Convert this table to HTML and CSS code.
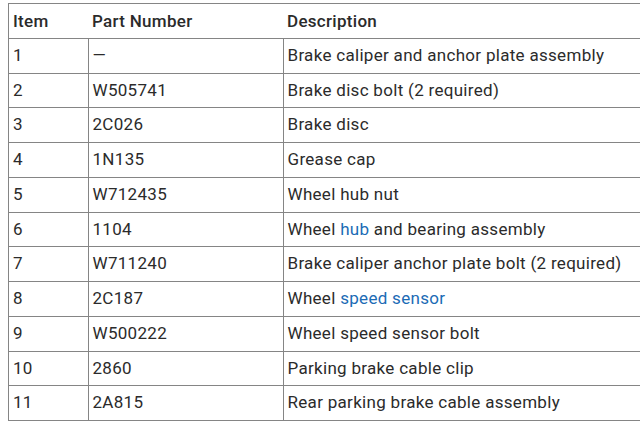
FILE: index.html
```html
<!DOCTYPE html>
<html>
<head>
<meta charset="utf-8">
<link rel="stylesheet" href="styles.css">
</head>
<body>
<table class="parts">
  <thead>
    <tr><th class="c-item">Item</th><th class="c-part">Part Number</th><th class="c-desc">Description</th></tr>
  </thead>
  <tbody>
    <tr><td>1</td><td>—</td><td>Brake caliper and anchor plate assembly</td></tr>
    <tr><td>2</td><td>W505741</td><td>Brake disc bolt (2 required)</td></tr>
    <tr><td>3</td><td>2C026</td><td>Brake disc</td></tr>
    <tr><td>4</td><td>1N135</td><td>Grease cap</td></tr>
    <tr><td>5</td><td>W712435</td><td>Wheel hub nut</td></tr>
    <tr><td>6</td><td>1104</td><td>Wheel <a class="link" href="#">hub</a> and bearing assembly</td></tr>
    <tr><td>7</td><td>W711240</td><td>Brake caliper anchor plate bolt (2 required)</td></tr>
    <tr><td>8</td><td>2C187</td><td>Wheel <a class="link" href="#">speed sensor</a></td></tr>
    <tr><td>9</td><td>W500222</td><td>Wheel speed sensor bolt</td></tr>
    <tr><td>10</td><td>2860</td><td>Parking brake cable clip</td></tr>
    <tr><td>11</td><td>2A815</td><td>Rear parking brake cable assembly</td></tr>
  </tbody>
</table>
</body>
</html>
```
FILE: styles.css
```css
html { overflow: hidden; }
body {
  margin: 3px 0 0 8px;
  background: #fff;
  font-family: Roboto, "Liberation Sans", sans-serif;
  font-size: 17px;
  letter-spacing: 0.3px;
  color: #2b2b2b;
}
.parts {
  border-collapse: collapse;
  width: 660px;
  table-layout: fixed;
}
.c-item { width: 70px; }
.c-part { width: 186px; }
.parts th, .parts td {
  border: 1px solid #858585;
  padding: 5px 5px 5px 4px;
  line-height: 23.73px;
  text-align: left;
  white-space: nowrap;
}
.parts th {
  font-weight: 500;
  border-left: none;
  border-right: none;
  line-height: 24px;
}
.parts th:first-child { border-left: 1px solid #858585; }
.parts td:last-child, .parts th:last-child { border-right: none; }
.link {
  color: #1b6bb5;
  text-decoration: none;
}
```
